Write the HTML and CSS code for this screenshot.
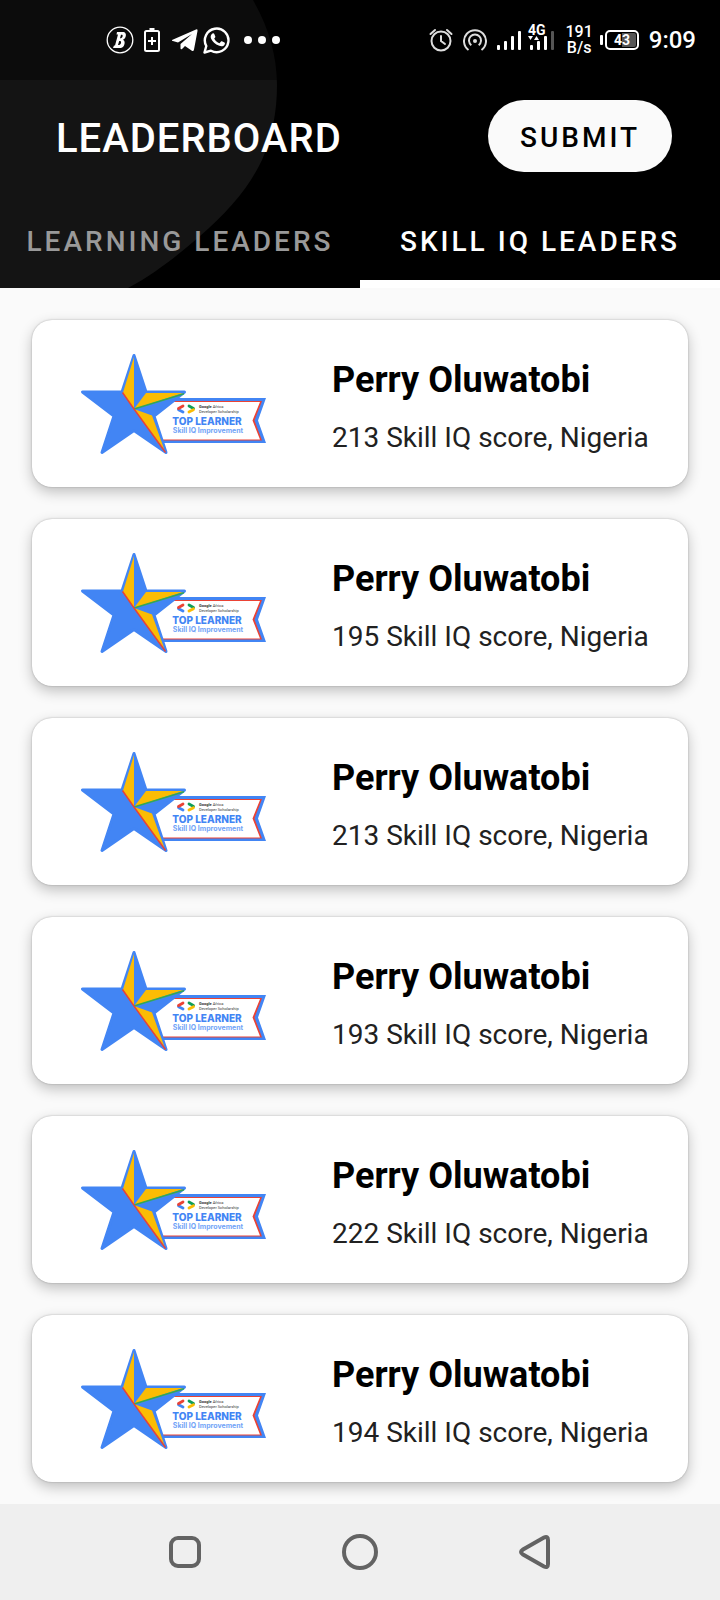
FILE: index.html
```html
<!DOCTYPE html>
<html lang="en">
<head>
<meta charset="utf-8">
<meta name="viewport" content="width=device-width, initial-scale=1">
<title>Leaderboard</title>
<link rel="stylesheet" href="styles.css">
</head>
<body>
<svg class="defs" aria-hidden="true">
  <symbol id="badge" viewBox="80 352 188 104">
    <path d="M150 398H266L258 420.500L266 443H150Z" fill="#4285f4"/>
    <path d="M150 401H262L254.500 420.500L262 440.500H150Z" fill="#ea4335"/>
    <path d="M150 402H260L252.500 420.500L260 439.500H150Z" fill="#fff"/>
    <path d="M134 355.500L146 392H184.500L154 416L166 452.500L134 430.500L102 452.500L114 416L82.500 392H122Z" fill="#4285f4" stroke="#4285f4" stroke-width="3" stroke-linejoin="round"/>
    <path d="M134 357V409L123 392.500ZM146 393H183L134 409ZM134 409L152 415.500L164.500 450Z" fill="#fbbc04"/>
    <path d="M134 409L184 393.800" stroke="#34a853" stroke-width="1.500"/>
    <path d="M122.500 392.500L134 409L165.500 452.500" fill="none" stroke="#ea4335" stroke-width="1.400"/>
    <g fill="none" stroke-width="2.800" stroke-linecap="round">
      <path d="M178.500 409.700L183 412" stroke="#4285f4"/>
      <path d="M178.500 408.500L183 406" stroke="#ea4335"/>
      <path d="M189 406L193.500 408.500" stroke="#0f9d58"/>
      <path d="M189 412L193.500 409.700" stroke="#fbbc04"/>
    </g>
  </symbol>
</svg>
<header class="header">
  <svg class="header-shape" viewBox="0 0 277 288" aria-hidden="true"><path d="M0 0H253C269 28 277 56 277 85C277 112 272 137 262 160C249 188 227 213 200 236C180 253 158 272 128 288H0Z" fill="#141414"/></svg>
  <div class="status">
    <div class="status-left">
      <svg class="ic-bet" viewBox="0 0 28 28"><circle cx="14" cy="14" r="12.800" fill="none" stroke="#fff" stroke-width="1.300"/><path fill-rule="evenodd" d="M11 6H16.500C19.500 6 20.500 8 19.500 11C19 12.500 18 13.300 17 13.700C19 14.500 19 17 18 19.500C17 21.500 15.500 22 13.500 22H7L8 19.500H9L12 8.500H10.500ZM15 8.800L14 12.300C15.500 12.300 16.200 11.500 16.600 10.200C16.900 9 16.300 8.700 15 8.800ZM13.200 15L12 19C13.500 19.200 14.500 18.500 15 17C15.400 15.500 14.700 14.900 13.200 15Z" fill="#fff"/></svg>
      <svg class="ic-power" viewBox="0 0 16 24"><path d="M5.500 0H10.500V2H5.500Z" fill="#fff"/><rect x="1" y="3" width="14" height="20" rx="1.500" fill="none" stroke="#fff" stroke-width="2"/><path d="M8 9V17M4 13H12" stroke="#fff" stroke-width="2"/></svg>
      <svg class="ic-tg" viewBox="0 0 26 24"><path d="M0 12L24 1.500Q26 .800 25.500 3L22 21.500Q21.500 24 19.500 22.500L13 18L10 21Q8.500 22 8.500 20V16L20 6L6 14.500L0 12.800Z" fill="#fff"/></svg>
      <svg class="ic-wa" viewBox="0 0 28 28"><path d="M1.500 26.500L3.300 20A11.800 11.800 0 1 1 8 24.700Z" fill="none" stroke="#fff" stroke-width="2.400" stroke-linejoin="round"/><path d="M9.500 7.500C10.300 7 11 7.300 11.300 8L12.300 10.400C12.500 11 12 11.700 11.200 12.500C12.500 15 14.200 16.300 16.500 17.200L18 15.500C18.400 15.100 18.900 15.200 19.400 15.400L21.500 16.500C22.200 16.900 22 17.800 21.500 18.700C20.500 20.300 18.300 20.500 16.300 19.800C12 18.300 9.500 15.800 8 12.500C7.300 10.500 7.700 8.500 9.500 7.500Z" fill="#fff"/></svg>
      <svg class="ic-dots" viewBox="0 0 36 8" fill="#fff"><circle cx="4" cy="4" r="4"/><circle cx="18" cy="4" r="4"/><circle cx="32" cy="4" r="4"/></svg>
    </div>
    <div class="status-right">
      <svg class="ic-round" viewBox="0 0 24 24" fill="none" stroke="#ddd" stroke-width="2" stroke-linecap="round"><circle cx="12" cy="13" r="9.500"/><path d="M12 8V13L16 16M1.500 6L6 2M22.500 6L18 2"/></svg>
      <svg class="ic-round" viewBox="0 0 24 24" fill="none" stroke="#ddd" stroke-width="2"><path d="M5.500 22A11 11 0 1 1 18.500 22M8.300 17.200A6 6 0 1 1 15.700 17.200"/><circle cx="12" cy="13" r="2" fill="#ddd" stroke="none"/></svg>
      <svg class="ic-signal" viewBox="0 0 25 24" fill="#fff"><rect y="19" width="3" height="5" rx="1"/><rect x="7" y="15" width="3" height="9" rx="1"/><rect x="14" y="10" width="3" height="14" rx="1"/><rect x="21" y="5" width="3" height="19" rx="1"/></svg>
      <svg class="ic-data" viewBox="0 0 27 28" fill="#fff"><text class="net" x="0" y="13">4G</text><path d="M0 14H5L2.500 18ZM6 18L8.500 14L11 18Z"/><rect x="2" y="23" width="3" height="5" rx="1"/><rect x="9" y="19" width="3" height="9" rx="1"/><rect x="16" y="14" width="3" height="14" rx="1"/><rect x="23" y="9" width="3" height="19" rx="1" fill="#555"/></svg>
      <div class="speed"><span>191</span><span>B/s</span></div>
      <svg class="ic-battery" viewBox="0 0 39 20"><rect y="5" width="3" height="10" rx="1" fill="#fff"/><rect x="6" y="1" width="32" height="18" rx="4" fill="none" stroke="#fff" stroke-width="2"/><path d="M22 3H34Q36 3 36 5V15Q36 17 34 17H22Z" fill="#555"/><text class="level" x="22" y="15" text-anchor="middle" fill="#fff">43</text></svg>
      <time class="clock">9:09</time>
    </div>
  </div>
  <div class="toolbar">
    <h1 class="title">LEADERBOARD</h1>
    <button class="submit" type="button">SUBMIT</button>
  </div>
  <nav class="tabs">
    <button class="tab" type="button">LEARNING LEADERS</button>
    <button class="tab tab-active" type="button">SKILL IQ LEADERS</button>
  </nav>
</header>
<main class="list">
  <article class="card">
    <svg class="badge" viewBox="80 352 188 104"><use href="#badge" x="80" y="352" width="188" height="104"/><text class="b-small" x="199" y="408"><tspan class="b-strong">Google</tspan> Africa</text><text class="b-small" x="199" y="413">Developer Scholarship</text><text class="b-top" x="207" y="425">TOP LEARNER</text><text class="b-skill" x="208" y="433">Skill IQ Improvement</text></svg>
    <div class="info"><h2 class="name">Perry Oluwatobi</h2><p class="score">213 Skill IQ score, Nigeria</p></div>
  </article>
  <article class="card">
    <svg class="badge" viewBox="80 352 188 104"><use href="#badge" x="80" y="352" width="188" height="104"/><text class="b-small" x="199" y="408"><tspan class="b-strong">Google</tspan> Africa</text><text class="b-small" x="199" y="413">Developer Scholarship</text><text class="b-top" x="207" y="425">TOP LEARNER</text><text class="b-skill" x="208" y="433">Skill IQ Improvement</text></svg>
    <div class="info"><h2 class="name">Perry Oluwatobi</h2><p class="score">195 Skill IQ score, Nigeria</p></div>
  </article>
  <article class="card">
    <svg class="badge" viewBox="80 352 188 104"><use href="#badge" x="80" y="352" width="188" height="104"/><text class="b-small" x="199" y="408"><tspan class="b-strong">Google</tspan> Africa</text><text class="b-small" x="199" y="413">Developer Scholarship</text><text class="b-top" x="207" y="425">TOP LEARNER</text><text class="b-skill" x="208" y="433">Skill IQ Improvement</text></svg>
    <div class="info"><h2 class="name">Perry Oluwatobi</h2><p class="score">213 Skill IQ score, Nigeria</p></div>
  </article>
  <article class="card">
    <svg class="badge" viewBox="80 352 188 104"><use href="#badge" x="80" y="352" width="188" height="104"/><text class="b-small" x="199" y="408"><tspan class="b-strong">Google</tspan> Africa</text><text class="b-small" x="199" y="413">Developer Scholarship</text><text class="b-top" x="207" y="425">TOP LEARNER</text><text class="b-skill" x="208" y="433">Skill IQ Improvement</text></svg>
    <div class="info"><h2 class="name">Perry Oluwatobi</h2><p class="score">193 Skill IQ score, Nigeria</p></div>
  </article>
  <article class="card">
    <svg class="badge" viewBox="80 352 188 104"><use href="#badge" x="80" y="352" width="188" height="104"/><text class="b-small" x="199" y="408"><tspan class="b-strong">Google</tspan> Africa</text><text class="b-small" x="199" y="413">Developer Scholarship</text><text class="b-top" x="207" y="425">TOP LEARNER</text><text class="b-skill" x="208" y="433">Skill IQ Improvement</text></svg>
    <div class="info"><h2 class="name">Perry Oluwatobi</h2><p class="score">222 Skill IQ score, Nigeria</p></div>
  </article>
  <article class="card">
    <svg class="badge" viewBox="80 352 188 104"><use href="#badge" x="80" y="352" width="188" height="104"/><text class="b-small" x="199" y="408"><tspan class="b-strong">Google</tspan> Africa</text><text class="b-small" x="199" y="413">Developer Scholarship</text><text class="b-top" x="207" y="425">TOP LEARNER</text><text class="b-skill" x="208" y="433">Skill IQ Improvement</text></svg>
    <div class="info"><h2 class="name">Perry Oluwatobi</h2><p class="score">194 Skill IQ score, Nigeria</p></div>
  </article>
</main>
<footer class="navbar">
  <button class="key" type="button" aria-label="Recent apps"><svg viewBox="0 0 36 36"><rect x="4" y="4" width="28" height="28" rx="7"/></svg></button>
  <button class="key" type="button" aria-label="Home"><svg viewBox="0 0 36 36"><circle cx="18" cy="18" r="16"/></svg></button>
  <button class="key" type="button" aria-label="Back"><svg viewBox="0 0 36 36"><path d="M27 3.500Q31 1.500 31 6V30Q31 34.500 27 32.500L6 20.500Q2 18 6 15.500Z"/></svg></button>
</footer>
</body>
</html>
```

FILE: styles.css
```css
* { box-sizing: border-box; }
body {
  margin: 0;
  min-height: 100vh;
  display: flex;
  flex-direction: column;
  background: #fafafa;
  font-family: Roboto, "Liberation Sans", sans-serif;
}
h1, h2, p { margin: 0; }
button { font: inherit; border: 0; padding: 0; }
svg { display: block; flex: none; }
.defs { position: absolute; width: 0; height: 0; }

.header { position: relative; isolation: isolate; background: #000; color: #fff; }
.header-shape { position: absolute; left: 0; top: 0; height: 100%; z-index: -1; }

.status {
  height: 80px;
  padding: 0 24px 0 106px;
  display: flex;
  align-items: center;
  justify-content: space-between;
  background: rgba(0, 0, 0, .4);
}
.status-left, .status-right { display: flex; align-items: center; gap: 10px; }
.ic-bet { width: 28px; height: 28px; }
.ic-power { width: 16px; height: 24px; }
.ic-tg { width: 26px; height: 24px; margin-left: 2px; }
.ic-wa { width: 28px; height: 28px; margin-left: -5px; }
.ic-dots { width: 36px; height: 8px; margin-left: 3px; }
.ic-round { width: 24px; height: 24px; }
.ic-signal { width: 25px; height: 24px; margin-bottom: 4px; }
.ic-data { width: 27px; height: 28px; margin: 0 0 8px -4px; overflow: visible; }
.net { font-size: 14px; font-weight: 700; }
.speed { display: flex; flex-direction: column; align-items: center; margin-right: -3px; font-size: 16px; line-height: 16px; font-weight: 500; }
.ic-battery { width: 39px; height: 20px; }
.level { font-size: 14px; font-weight: 700; }
.clock { font-size: 24px; line-height: 32px; font-weight: 500; }

.toolbar {
  height: 112px;
  padding: 0 48px 0 56px;
  display: flex;
  align-items: center;
  justify-content: space-between;
}
.title { padding-top: 6px; font-size: 40px; line-height: 48px; font-weight: 500; letter-spacing: 1px; }
.submit {
  height: 72px;
  padding: 2px 32px 0;
  border-radius: 36px;
  background: #fafafa;
  color: #000;
  font-size: 28px;
  font-weight: 500;
  letter-spacing: 3px;
}
.tabs { display: grid; grid-template-columns: 1fr 1fr; }
.tab {
  height: 96px;
  padding-top: 2px;
  border-top: 8px solid transparent;
  border-bottom: 8px solid transparent;
  background: none;
  color: #999;
  font-size: 28px;
  font-weight: 500;
  letter-spacing: 3px;
  white-space: nowrap;
}
.tab-active { color: #fff; border-bottom-color: #fff; }

.list { flex: 1; padding: 32px 32px 22px; display: flex; flex-direction: column; gap: 32px; }
.card {
  display: grid;
  grid-template-columns: 252px 1fr;
  align-items: center;
  padding: 32px 16px 31px 48px;
  border-radius: 20px;
  background: #fff;
  box-shadow: 0 5px 14px rgba(0, 0, 0, .24), 0 0 2px rgba(0, 0, 0, .28);
}
.badge { width: 188px; height: 104px; }
.b-small { font-size: 4px; fill: #333; }
.b-strong { font-weight: 700; }
.b-top { font: 800 10px Inter, sans-serif; fill: #4285f4; text-anchor: middle; }
.b-skill { font: 700 7px Inter, sans-serif; fill: #73a4f7; text-anchor: middle; }
.info { display: grid; gap: 20px; padding-top: 6px; }
.name { font-size: 36px; line-height: 42px; font-weight: 700; color: #000; }
.score { font-size: 28px; line-height: 34px; color: #212121; white-space: nowrap; }

.navbar {
  position: relative;
  height: 96px;
  padding: 0 98px;
  display: flex;
  align-items: center;
  justify-content: space-around;
  background: #efefef;
}
.key { background: none; }
.key svg { width: 36px; height: 36px; fill: none; stroke: #636363; stroke-width: 4; }
```
